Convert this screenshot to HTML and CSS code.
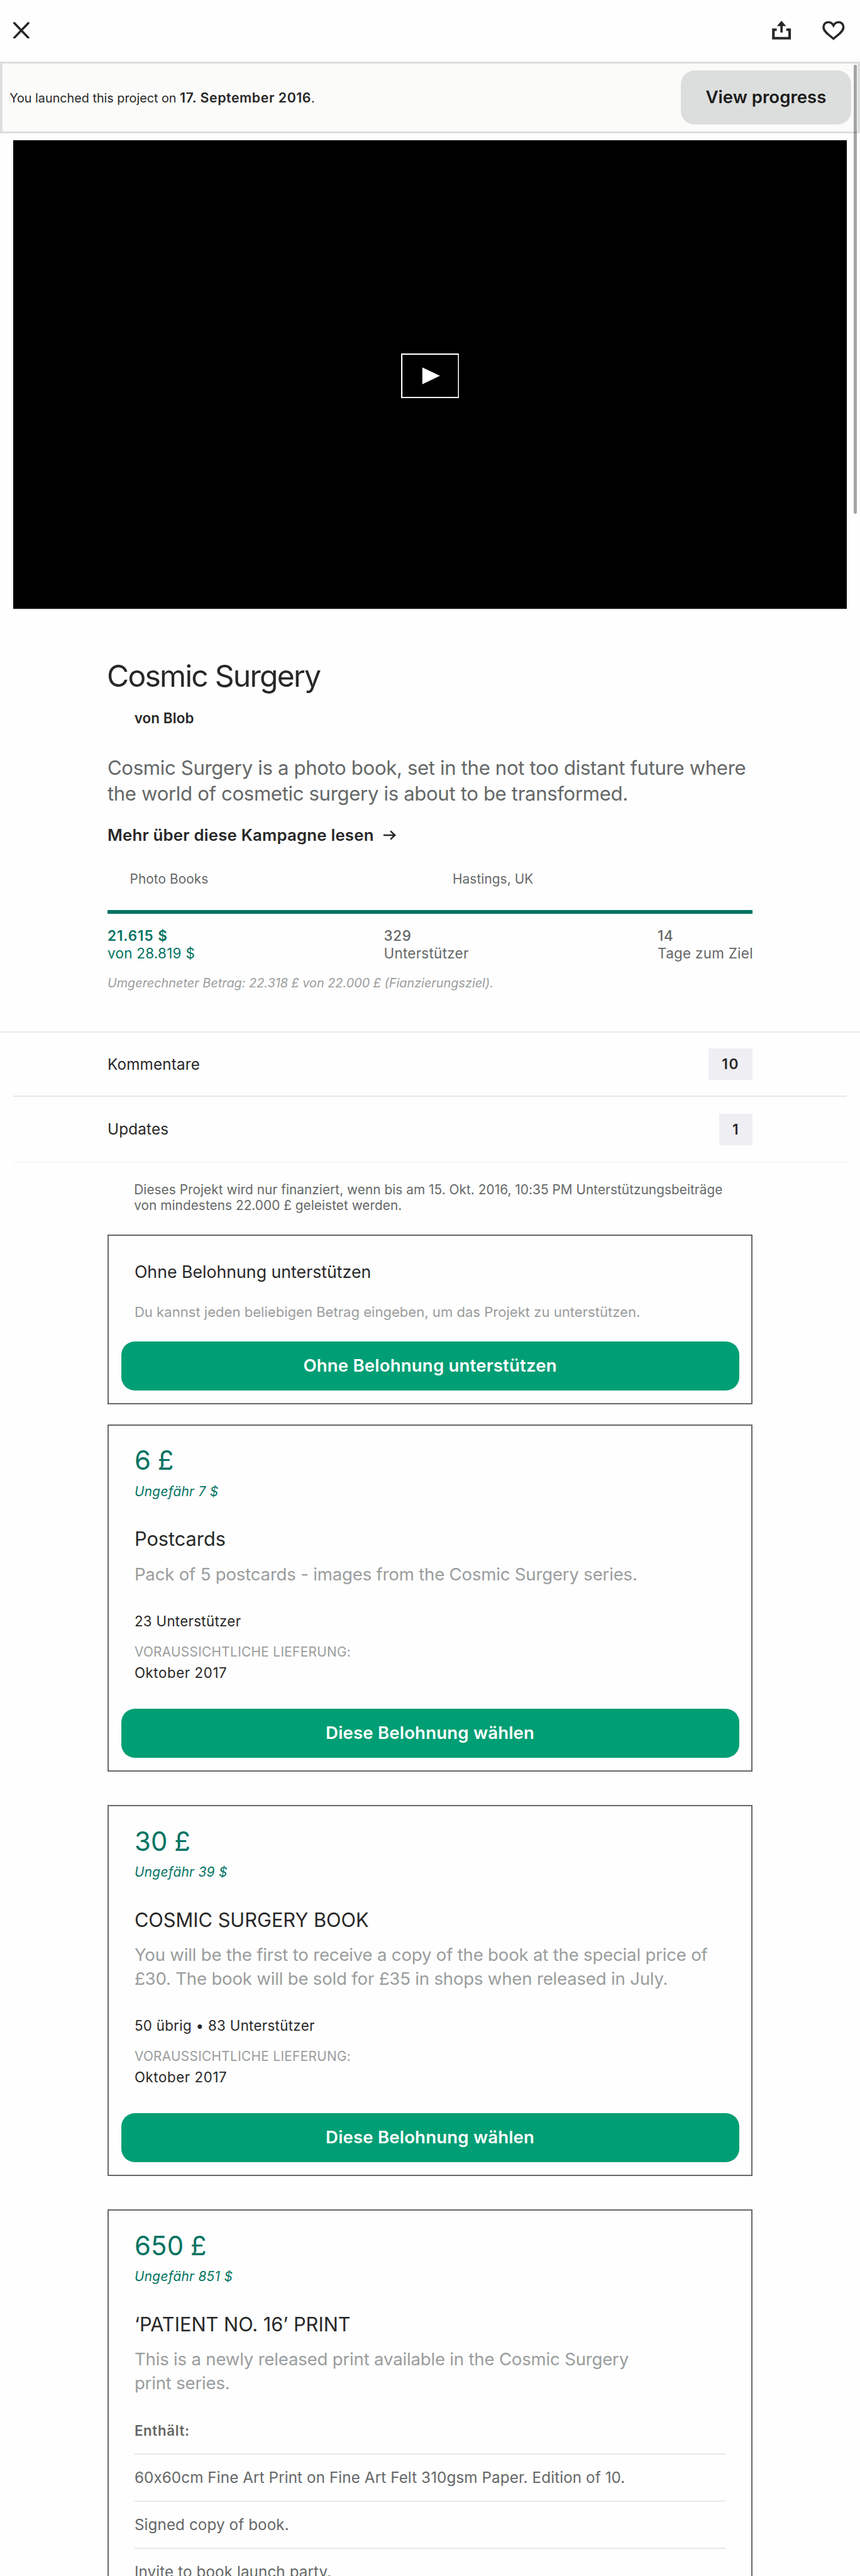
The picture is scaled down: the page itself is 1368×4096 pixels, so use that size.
FILE: index.html
```html
<!DOCTYPE html>
<html lang="de">
<head>
<meta charset="utf-8">
<title>Cosmic Surgery</title>
<link rel="stylesheet" href="styles.css">
</head>
<body>
<div class="page">
  <header class="nav">
    <svg class="icon-close" viewBox="0 0 29 30"><path d="M2 2L27 28M27 2L2 28" fill="none" stroke="currentColor" stroke-width="4" stroke-linecap="round"/></svg>
    <div class="nav-actions">
      <svg class="icon-share" viewBox="0 0 34 34"><path d="M8.5 16H2.5V31.2H31.5V16H25.5" fill="none" stroke="currentColor" stroke-width="4.6"/><path d="M17 21V8" fill="none" stroke="currentColor" stroke-width="4.2"/><path d="M17 0L25.3 9.6H8.7Z" fill="currentColor"/></svg>
      <svg class="icon-heart" viewBox="0 0 40 35"><path d="M20 32C16 28 2.2 20.500 2.200 11.500C2.200 6.300 5.800 2.500 10.500 2.500C14.800 2.500 18 4.800 20 8.500C22 4.800 25.200 2.500 29.500 2.500C34.200 2.500 37.800 6.300 37.800 11.500C37.800 20.500 24 28 20 32Z" fill="none" stroke="currentColor" stroke-width="4"/></svg>
    </div>
  </header>

  <section class="banner">
    <p class="banner-text">You launched this project on <b>17. September 2016</b>.</p>
    <button class="btn btn-grey">View progress</button>
  </section>

  <div class="video">
    <svg class="play" viewBox="0 0 104 80"><rect x="1.200" y="1.200" width="101.600" height="77.600" fill="none" stroke="#fff" stroke-width="2.400"/><path d="M38 25V55L69.500 40Z" fill="#fff"/></svg>
  </div>
  <div class="rule rule-inset"></div>

  <section class="summary">
    <h1 class="title">Cosmic Surgery</h1>
    <p class="creator">von Blob</p>
    <p class="blurb">Cosmic Surgery is a photo book, set in the not too distant future where<br>the world of cosmetic surgery is about to be transformed.</p>
    <a class="more">Mehr über diese Kampagne lesen
      <svg class="icon-arrow" viewBox="0 0 23 18"><path d="M0 9H20M12.500 1.500L20.500 9L12.500 16.500" fill="none" stroke="currentColor" stroke-width="2.800"/></svg>
    </a>
    <div class="meta"><span>Photo Books</span><span>Hastings, UK</span></div>
    <div class="progress"></div>
    <div class="stats">
      <p class="stat stat-pledged"><b>21.615 $</b><span>von 28.819 $</span></p>
      <p class="stat"><b>329</b><span>Unterstützer</span></p>
      <p class="stat stat-days"><b>14</b><span>Tage zum Ziel</span></p>
    </div>
    <p class="converted">Umgerechneter Betrag: 22.318 £ von 22.000 £ (Fianzierungsziel).</p>
  </section>

  <div class="rule"></div>
  <div class="link-row"><span>Kommentare</span><span class="count">10</span></div>
  <div class="rule rule-inset"></div>
  <div class="link-row link-row-updates"><span>Updates</span><span class="count">1</span></div>
  <div class="rule rule-inset rule-faint"></div>

  <main class="rewards">
    <p class="notice">Dieses Projekt wird nur finanziert, wenn bis am 15. Okt. 2016, 10:35 PM Unterstützungsbeiträge<br>von mindestens 22.000 £ geleistet werden.</p>

    <article class="card card-none">
      <h2 class="none-title">Ohne Belohnung unterstützen</h2>
      <p class="none-text">Du kannst jeden beliebigen Betrag eingeben, um das Projekt zu unterstützen.</p>
      <button class="btn btn-green">Ohne Belohnung unterstützen</button>
    </article>

    <article class="card card-first">
      <p class="price">6 £</p>
      <p class="approx">Ungefähr 7 $</p>
      <h2 class="reward-title">Postcards</h2>
      <p class="reward-text">Pack of 5 postcards - images from the Cosmic Surgery series.</p>
      <p class="backers">23 Unterstützer</p>
      <p class="delivery-label">VORAUSSICHTLICHE LIEFERUNG:</p>
      <p class="delivery">Oktober 2017</p>
      <button class="btn btn-green">Diese Belohnung wählen</button>
    </article>

    <article class="card">
      <p class="price">30 £</p>
      <p class="approx">Ungefähr 39 $</p>
      <h2 class="reward-title">COSMIC SURGERY BOOK</h2>
      <p class="reward-text">You will be the first to receive a copy of the book at the special price of<br>£30. The book will be sold for £35 in shops when released in July.</p>
      <p class="backers">50 übrig • 83 Unterstützer</p>
      <p class="delivery-label">VORAUSSICHTLICHE LIEFERUNG:</p>
      <p class="delivery">Oktober 2017</p>
      <button class="btn btn-green">Diese Belohnung wählen</button>
    </article>

    <article class="card">
      <p class="price">650 £</p>
      <p class="approx">Ungefähr 851 $</p>
      <h2 class="reward-title">‘PATIENT NO. 16’ PRINT</h2>
      <p class="reward-text">This is a newly released print available in the Cosmic Surgery<br>print series.</p>
      <p class="includes">Enthält:</p>
      <ul class="items">
        <li>60x60cm Fine Art Print on Fine Art Felt 310gsm Paper. Edition of 10.</li>
        <li>Signed copy of book.</li>
        <li>Invite to book launch party.</li>
      </ul>
    </article>
  </main>
  <div class="scrollbar"></div>
</div>
</body>
</html>
```
FILE: styles.css
```css
/* 1rem = ten design units */
html { font-size: 8.905px; }

* { box-sizing: border-box; margin: 0; padding: 0; }

body {
  font-family: Inter, "Liberation Sans", sans-serif;
  color: #282828;
  background: #fefefe;
}

svg { display: block; }

.page {
  position: relative;
  height: 4096px;
  overflow: hidden;
}

/* Navigation */
.nav {
  display: flex;
  justify-content: space-between;
  height: 11rem;
  padding: 3.7rem 2.7rem 0 2.35rem;
}
.icon-close { width: 2.9rem; height: 3rem; margin-top: .2rem; }
.nav-actions { display: flex; gap: 5.6rem; }
.icon-share { width: 3.4rem; height: 3.4rem; }
.icon-heart { width: 4rem; height: 3.5rem; }

/* Launch banner */
.banner {
  display: flex;
  align-items: center;
  justify-content: space-between;
  height: 12.8rem;
  padding: 0 1.15rem 0 1.25rem;
  border: 4px solid #dcdedd;
  border-top-width: 3px;
  border-bottom-width: 3px;
  background: #fbfbfa;
}
.banner-text { font-size: 2.22rem; }
.banner-text b { font-size: 2.4rem; font-weight: 600; letter-spacing: .025em; }

.btn {
  display: block;
  border: 0;
  border-radius: 2.4rem;
  font: 600 3.1rem/4rem Inter, "Liberation Sans", sans-serif;
  text-align: center;
}
.btn-grey { width: 30.4rem; height: 9.6rem; background: #dcdedd; color: #1b1b1b; }
.btn-green {
  width: 110.4rem;
  height: 8.8rem;
  margin-left: 2.2rem;
  background: #009e74;
  color: #fff;
  letter-spacing: .006em;
}

/* Video */
.video {
  display: flex;
  align-items: center;
  justify-content: center;
  height: 83.7rem;
  margin: 1.2rem 2.4rem 0;
  padding-top: .5rem;
  background: #000;
}
.play { width: 10.4rem; height: 8rem; }

.rule { height: 2px; background: #e8e8e8; }
.rule-inset { margin: 0 2.4rem; }
.rule-faint { background: #f6f6f6; }

/* Summary */
.summary { padding: 8.5rem 19.2rem 7.15rem; }
.title {
  margin-left: -.1rem;
  font-size: 5.4rem;
  line-height: 6.6rem;
  font-weight: 400;
  letter-spacing: -.037em;
}
.creator {
  margin: 2.68rem 0 0 4.8rem;
  font-size: 2.52rem;
  line-height: 3.2rem;
  font-weight: 600;
  letter-spacing: .004em;
}
.blurb {
  margin-top: 4.92rem;
  font-size: 3.5rem;
  line-height: 4.6rem;
  letter-spacing: -.0115em;
  color: #656868;
  white-space: nowrap;
}
.more {
  display: flex;
  align-items: center;
  gap: 1.7rem;
  margin-top: 3.35rem;
  font-size: 2.9rem;
  line-height: 3.6rem;
  font-weight: 600;
  letter-spacing: .0074em;
}
.icon-arrow { width: 2.3rem; height: 1.8rem; }
.meta {
  display: grid;
  grid-template-columns: 1fr 1fr;
  margin-top: 4.6rem;
  padding-left: 4rem;
  font-size: 2.33rem;
  line-height: 3rem;
  letter-spacing: .0055em;
  color: #656868;
}
.meta span + span { padding-left: 2.05rem; }
.progress { height: .6rem; margin-top: 3.95rem; background: #037362; }
.stats {
  display: grid;
  grid-template-columns: 49.35rem 1fr 16.95rem;
  margin-top: 2.38rem;
  font-size: 2.52rem;
  line-height: 3.2rem;
  letter-spacing: .012em;
  color: #656868;
  white-space: nowrap;
}
.stat b, .stat span { display: block; }
.stat b { font-weight: 500; letter-spacing: .03em; }
.stat-pledged { color: #037362; }
.stat-pledged b { font-weight: 600; letter-spacing: .042em; }
.converted {
  margin-top: 2.17rem;
  font-size: 2.23rem;
  line-height: 3rem;
  font-style: italic;
  color: #9a9d9d;
}

/* Link rows */
.link-row {
  display: flex;
  align-items: center;
  justify-content: space-between;
  height: 11.2rem;
  padding: 0 19.2rem;
  font-size: 2.72rem;
  letter-spacing: .008em;
}
.link-row-updates { height: 11.6rem; }
.count {
  padding: 0 2.35rem 0 2.4rem;
  background: #efeef3;
  font-size: 2.55rem;
  line-height: 5.6rem;
  font-weight: 600;
  letter-spacing: .07em;
}

/* Rewards */
.rewards { padding: 3.45rem 19.2rem 0; }
.notice {
  margin-left: 4.75rem;
  font-size: 2.33rem;
  line-height: 2.8rem;
  letter-spacing: .0033em;
  color: #656868;
  white-space: nowrap;
}

.card {
  margin-top: 6rem;
  padding: 3.46rem 0 2.18rem;
  border: 2px solid #656868;
  white-space: nowrap;
}
.card > :not(.btn) { margin-left: 4.6rem; }
.card-none { margin-top: 3.65rem; padding-top: 4.7rem; }
.card-first { margin-top: 3.6rem; }

.none-title { font-size: 3rem; line-height: 3.6rem; font-weight: 400; }
.none-text {
  margin-top: 3.9rem;
  font-size: 2.48rem;
  line-height: 3rem;
  color: #9a9d9d;
}
.none-text + .btn { margin-top: 3.7rem; }

.price { font-size: 4.7rem; line-height: 5.6rem; word-spacing: -.03em; letter-spacing: .005em; color: #037362; }
.approx {
  margin-top: 1.27rem;
  font-size: 2.33rem;
  line-height: 3rem;
  font-style: italic;
  letter-spacing: .017em;
  color: #037362;
}
.reward-title { margin-top: 4.78rem; font-size: 3.45rem; line-height: 4.2rem; font-weight: 400; }
.reward-text {
  margin-top: 2.19rem;
  font-size: 3.1rem;
  line-height: 4.2rem;
  letter-spacing: -.0072em;
  color: #9a9d9d;
}
.backers { margin-top: 4.74rem; font-size: 2.5rem; line-height: 3.2rem; letter-spacing: .015em; }
.delivery-label {
  margin-top: 2.39rem;
  font-size: 2.33rem;
  line-height: 3rem;
  letter-spacing: .017em;
  color: #9a9d9d;
}
.delivery { margin-top: .53rem; font-size: 2.5rem; line-height: 3.2rem; letter-spacing: .027em; }
.delivery + .btn { margin-top: 4.82rem; }

.includes {
  margin-top: 4.75rem;
  font-size: 2.5rem;
  line-height: 3.2rem;
  font-weight: 600;
  letter-spacing: .03em;
  color: #656868;
}
.items {
  margin-top: 2.43rem;
  margin-right: 4.6rem;
  list-style: none;
  font-size: 2.72rem;
  letter-spacing: .004em;
  color: #656868;
}
.items li { line-height: 8.2rem; }
.items li::before { content: ""; display: block; height: 2px; background: #e8e8e8; }

/* Overlay scroll indicator */
.scrollbar {
  position: absolute;
  top: 11.6rem;
  right: .6rem;
  width: .5rem;
  height: 80.1rem;
  border-radius: .25rem;
  background: rgba(0, 0, 0, .35);
}
```
